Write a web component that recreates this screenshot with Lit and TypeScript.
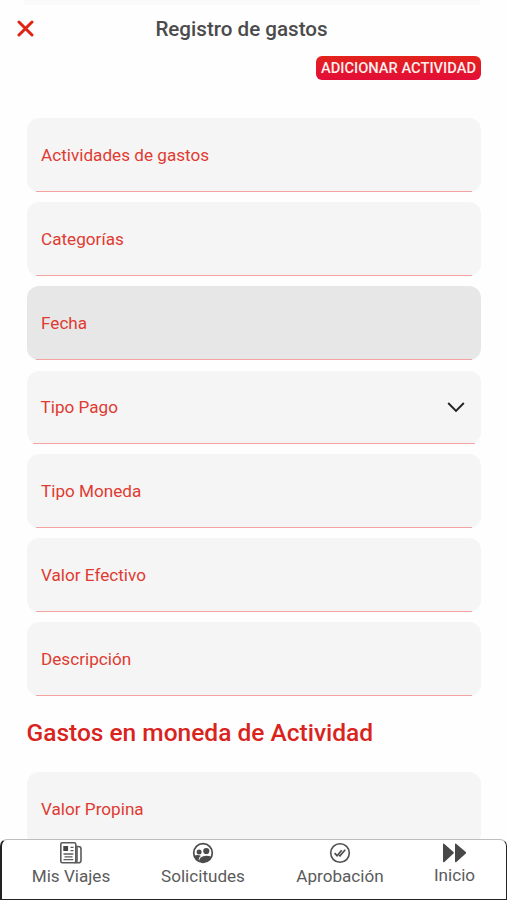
import { LitElement, html, svg, css } from "lit";
import { customElement, property } from "lit/decorators.js";
import { classMap } from "lit/directives/class-map.js";

@customElement("form-field")
class FormField extends LitElement {
  @property() label = "";
  @property({ type: Boolean }) active = false;
  @property({ type: Boolean }) select = false;

  static styles = css`
    :host { display: block; }
    .field {
      position: relative;
      box-sizing: border-box;
      height: 74px;
      padding: 0 16px 0 14.5px;
      border-radius: 12px;
      background: #f5f5f5;
      display: flex;
      align-items: center;
      justify-content: space-between;
      color: #df3b32;
      font-size: 17.15px;
      line-height: 20px;
    }
    .field::after {
      content: "";
      position: absolute;
      left: 9px;
      right: 9px;
      bottom: 0;
      height: 1px;
      background: #f5a3a2;
    }
    .active { background: #e7e7e7; }
    .select { height: 73px; padding-left: 14px; }
    .select::after { left: 6px; right: 6px; }
    svg { display: block; }
  `;

  render() {
    return html`<div class=${classMap({ field: true, active: this.active, select: this.select })}>
      <span>${this.label}</span>
      ${this.select
        ? html`<svg width="18" height="12" viewBox="0 0 18 12" fill="none" stroke="#222" stroke-width="1.9">
            <path d="M1.2 2 9 9.8 16.8 2" />
          </svg>`
        : ""}
    </div>`;
  }
}

const icons = {
  news: svg`<g fill="none" stroke="#5b5b5b" stroke-width="1.6">
      <rect x="1.8" y="1.8" width="15" height="20" rx="1.5" />
      <path d="M16.8 5.5h2.7q2.5 0 2.5 2.5v11.5q0 2.3-2.6 2.3h-4M18 6v13.5q0 2-2 2.2" />
      <path d="M11.5 6.3h3M11.5 9.6h3M4.5 13h9.8M5.5 15.8h8M4.5 18.6h9.8" stroke-width="1.3" />
    </g><rect x="4.3" y="5" width="4.8" height="5" fill="#444" />`,
  users: svg`<circle cx="12" cy="12" r="9.3" fill="#fff" stroke="#4b4b4b" stroke-width="1.7" />
    <g fill="#4b4b4b"><circle cx="8.1" cy="10.9" r="2.5" /><circle cx="15.3" cy="10" r="3.1" />
    <path d="M3.2 14.8q3.4-1.5 6.8.1-2.6 1.3-2.3 4.8Q4.3 18.2 3.2 14.8Z" />
    <path d="M8.1 20q.3-4.9 7.2-5.2 2.8 0 5.4 1.2Q17.7 21.6 12 21.3q-2.2 0-3.9-1.3Z" /></g>`,
  checks: svg`<g fill="none" stroke="#505050"><circle cx="12" cy="12" r="9.3" stroke-width="1.6" />
    <path d="m6.6 12.1 2.5 2.6 4.6-5.5M11 14.1l1 .8 5.2-6.1" stroke-width="1.7" /></g>`,
  forward: svg`<path d="M1 3.5Q1 2 2.4 2.9L11.5 11q.9.8 0 1.6L2.4 21Q1 22 1 20.3ZM13 3.5Q13 2 14.4 2.9l9.4 8.1q.9.8 0 1.6L14.4 21Q13 22 13 20.3Z" fill="#484848" />`,
};

@customElement("app-root")
class AppRoot extends LitElement {
  static styles = css`
    :host {
      display: flex;
      flex-direction: column;
      height: 900px;
      overflow: hidden;
      background: #fefefe;
      font-family: Roboto, sans-serif;
    }
    .strip { flex: none; height: 5px; margin: 0 27px 0 24px; background: #fafafa; }
    header {
      flex: none;
      display: grid;
      grid-template-columns: 51px 1fr 75px;
      align-items: center;
      height: 47px;
    }
    .close { display: block; margin-left: 17px; }
    h1 {
      margin: 0;
      justify-self: center;
      font-size: 20.6px;
      line-height: 24px;
      font-weight: 500;
      color: #4b4b4b;
      white-space: nowrap;
    }
    .actions { flex: none; display: flex; justify-content: flex-end; padding: 4px 26px 38px 0; }
    button {
      width: 165px;
      height: 24px;
      padding: 0;
      border: 0;
      border-radius: 6px;
      background: linear-gradient(#e3231c, #e30d38);
      color: #fff0ee;
      font: 500 14.7px/24px Roboto, sans-serif;
      white-space: nowrap;
    }
    main {
      flex: 1;
      min-height: 0;
      overflow: hidden;
      padding: 0 26px 0 26.5px;
    }
    .fields { display: grid; gap: 10.2px; }
    h2 {
      margin: 20.5px 0 24.3px;
      font-size: 24.5px;
      line-height: 31px;
      font-weight: 500;
      color: #d9241d;
      white-space: nowrap;
    }
    .bar { flex: none; background: linear-gradient(#f5f5f5 0 0) 26.5px 0 / 455px 10px no-repeat; }
    nav {
      box-sizing: border-box;
      height: 61px;
      display: grid;
      grid-template-columns: 138px 126px 148px 1fr;
      border: solid #222;
      border-width: 1px 1px 1px 2px;
      border-top-color: #bdbdbd;
      border-radius: 7px 7px 0 0;
      background: #fff;
    }
    .tab {
      display: flex;
      flex-direction: column;
      align-items: center;
      padding-top: 1px;
      color: #5b5b5b;
      font-size: 17.1px;
      line-height: 22px;
      white-space: nowrap;
    }
    .tab svg { display: block; }
    .tab.last { padding-right: 11px; }
    .tab.last svg { margin-bottom: -1px; }
  `;

  render() {
    const tabs = [
      ["Mis Viajes", icons.news, 24],
      ["Solicitudes", icons.users, 24],
      ["Aprobación", icons.checks, 24],
      ["Inicio", icons.forward, 25],
    ] as const;
    return html`
      <div class="strip"></div>
      <header>
        <svg class="close" width="17" height="17" viewBox="0 0 17 17" fill="none" stroke="#df2414" stroke-width="3" stroke-linecap="round">
          <path d="m2 2 13 13M15 2 2 15" />
        </svg>
        <h1>Registro de gastos</h1>
      </header>
      <div class="actions"><button>ADICIONAR ACTIVIDAD</button></div>
      <main>
        <div class="fields">
          <form-field label="Actividades de gastos"></form-field>
          <form-field label="Categorías"></form-field>
          <form-field label="Fecha" active></form-field>
          <form-field label="Tipo Pago" select></form-field>
          <form-field label="Tipo Moneda"></form-field>
          <form-field label="Valor Efectivo"></form-field>
          <form-field label="Descripción"></form-field>
        </div>
        <h2>Gastos en moneda de Actividad</h2>
        <form-field label="Valor Propina"></form-field>
      </main>
      <div class="bar">
        <nav>
          ${tabs.map(
            ([label, icon, width]) => html`<div class=${classMap({ tab: true, last: label === "Inicio" })}>
              <svg width=${width} height="24" viewBox="0 0 ${width} 24">${icon}</svg>
              <span>${label}</span>
            </div>`
          )}
        </nav>
      </div>
    `;
  }
}
